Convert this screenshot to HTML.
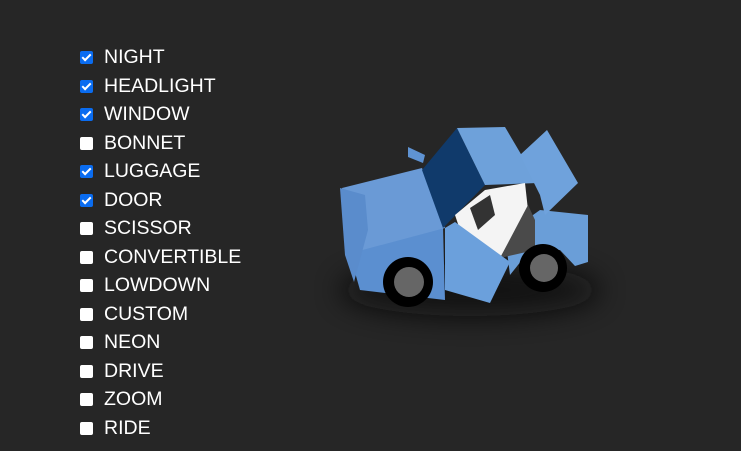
<!DOCTYPE html>
<html><head><style>
body{margin:0;width:741px;height:451px;background:#262626;overflow:hidden;font-family:"Liberation Sans",sans-serif;position:relative}
.r{position:absolute;left:80px;height:20px;display:flex;align-items:center;color:#fff;font-size:19.5px}
.b{width:13px;height:13px;border-radius:2px;background:#fff;margin-right:11px;position:relative}
.c{background:#0a6cf0}
.c:after{content:"";position:absolute;left:4px;top:1px;width:3px;height:7px;border:solid #fff;border-width:0 2px 2px 0;transform:rotate(45deg)}
</style></head><body>
<div class="r" style="top:47px"><span class="b c"></span>NIGHT</div>
<div class="r" style="top:76px"><span class="b c"></span>HEADLIGHT</div>
<div class="r" style="top:104px"><span class="b c"></span>WINDOW</div>
<div class="r" style="top:133px"><span class="b"></span>BONNET</div>
<div class="r" style="top:161px"><span class="b c"></span>LUGGAGE</div>
<div class="r" style="top:190px"><span class="b c"></span>DOOR</div>
<div class="r" style="top:218px"><span class="b"></span>SCISSOR</div>
<div class="r" style="top:247px"><span class="b"></span>CONVERTIBLE</div>
<div class="r" style="top:275px"><span class="b"></span>LOWDOWN</div>
<div class="r" style="top:304px"><span class="b"></span>CUSTOM</div>
<div class="r" style="top:332px"><span class="b"></span>NEON</div>
<div class="r" style="top:361px"><span class="b"></span>DRIVE</div>
<div class="r" style="top:389px"><span class="b"></span>ZOOM</div>
<div class="r" style="top:418px"><span class="b"></span>RIDE</div>
<svg width="741" height="451" style="position:absolute;left:0;top:0">
<defs><filter id="f" x="-50%" y="-100%" width="200%" height="300%"><feGaussianBlur stdDeviation="14"/></filter></defs>
<ellipse cx="470" cy="290" rx="130" ry="26" fill="#0e0e0e" opacity="0.8" filter="url(#f)"/>
<polygon points="345,205 443,228 445,300 360,290 352,262" fill="#5b8fd0"/>
<polygon points="342,188 422,168 445,228 355,252" fill="#6a9ad6"/>
<polygon points="340,188 365,195 368,230 354,282 345,255" fill="#5a8ccc"/>
<polygon points="540,210 588,215 588,262 575,266 560,250 530,250 510,275 505,235" fill="#6a9ed8"/>
<polygon points="422,170 457,128 485,185 443,228" fill="#103a6b"/>
<polygon points="457,128 505,127 538,183 485,185" fill="#6ea1da"/>
<polygon points="520,155 547,130 578,183 545,215 540,195" fill="#6fa2dc"/>
<polygon points="455,215 485,190 525,183 528,210 500,258 465,245" fill="#f4f4f4"/>
<polygon points="470,208 490,195 495,215 478,230" fill="#333"/>
<polygon points="528,205 535,220 535,250 500,258" fill="#4a4a4a"/>
<circle cx="408" cy="282" r="25" fill="#000"/><circle cx="409" cy="282" r="15" fill="#666"/>
<circle cx="543" cy="268" r="24" fill="#000"/><circle cx="544" cy="268" r="14" fill="#666"/>
<polygon points="445,228 455,222 510,262 490,303 445,290" fill="#6ba0dc"/>
<polygon points="408,147 425,155 423,163 408,157" fill="#5f93d3"/>
</svg>
</body></html>
